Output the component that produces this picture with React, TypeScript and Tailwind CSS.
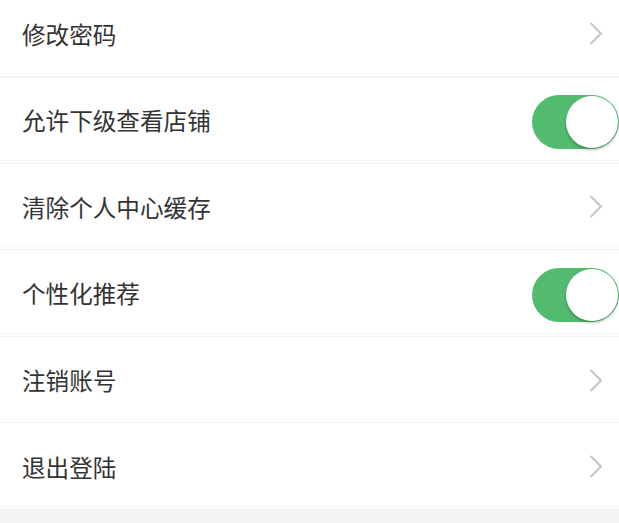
import React from "react";

type Item = { label: string; kind: "arrow" | "toggle" };

const items: Item[] = [
  { label: "修改密码", kind: "arrow" },
  { label: "允许下级查看店铺", kind: "toggle" },
  { label: "清除个人中心缓存", kind: "arrow" },
  { label: "个性化推荐", kind: "toggle" },
  { label: "注销账号", kind: "arrow" },
  { label: "退出登陆", kind: "arrow" },
];

function Chevron() {
  return (
    <svg width="14" height="23" viewBox="0 0 14 23" className="mr-[16px] mt-[4px]">
      <polyline
        points="2,1.5 12,11.5 2,21.5"
        fill="none"
        stroke="#c4c4c4"
        strokeWidth="2"
        strokeLinecap="round"
        strokeLinejoin="round"
      />
    </svg>
  );
}

function Toggle() {
  return (
    <div className="relative mt-[8px] h-[54px] w-[87px] rounded-full bg-[#52bb6e]">
      <div className="absolute right-[1px] top-[1px] h-[52px] w-[52px] rounded-full bg-white shadow-[0_2px_3px_rgba(0,0,0,0.25)]" />
    </div>
  );
}

export default function App() {
  return (
    <div
      className="h-[523px] w-[619px] overflow-hidden bg-[#f4f4f4]"
      style={{ fontFamily: '"Noto Sans CJK SC", "Noto Sans", sans-serif' }}
    >
      <div className="-mt-[9.6px] bg-white">
        {items.map((it) => (
          <div key={it.label} className="flex h-[86.6px] flex-col">
            <div className="flex flex-1 items-center justify-between pl-[22px]">
              <span className="pt-[4px] text-[23.6px] leading-[32px] text-[#333333]">{it.label}</span>
              {it.kind === "arrow" ? <Chevron /> : <Toggle />}
            </div>
            <div className="h-[4px] border-t border-b border-t-[#f6f6f6] border-b-[#f1f1f1] bg-white" />
          </div>
        ))}
      </div>
    </div>
  );
}
